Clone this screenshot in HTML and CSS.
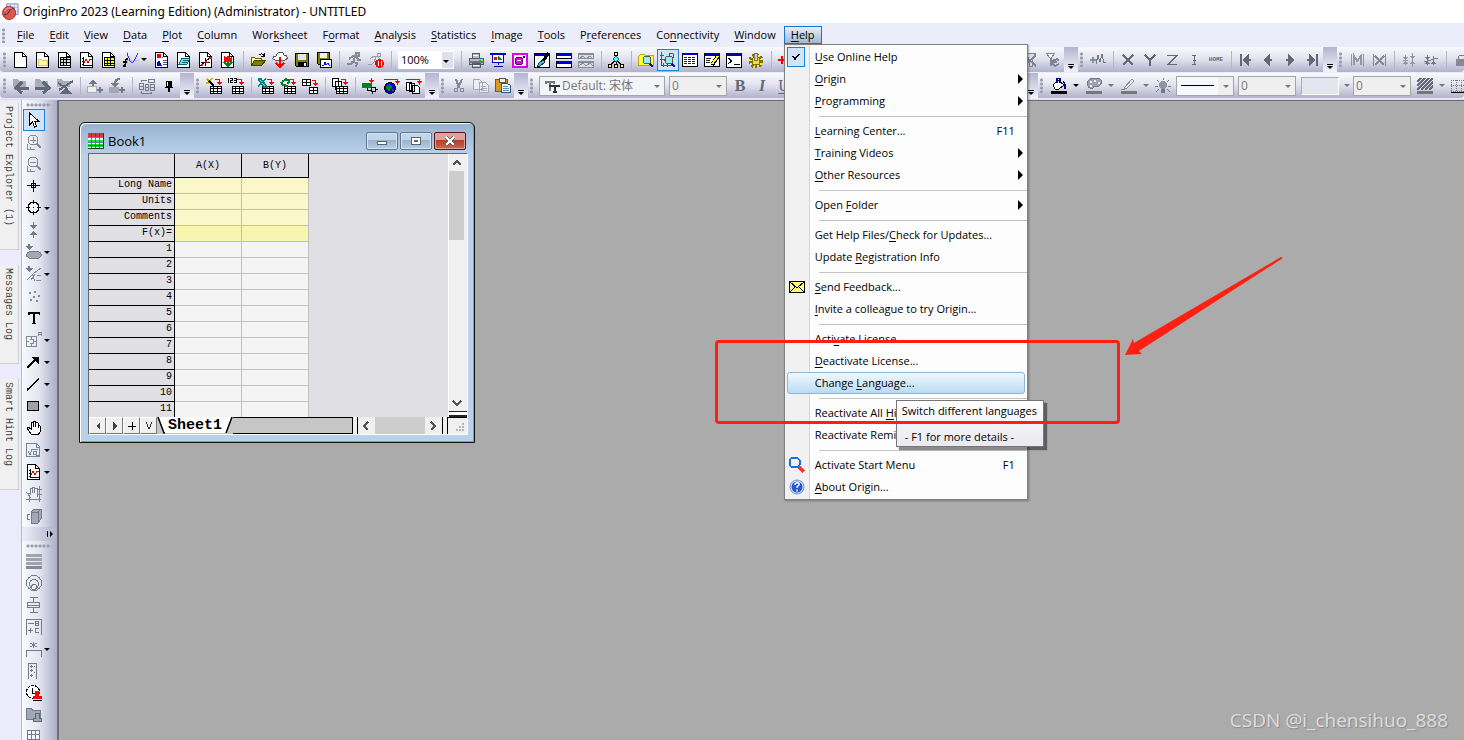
FILE: index.html
```html
<!DOCTYPE html>
<html lang="en">
<head>
<meta charset="utf-8">
<title>OriginPro 2023 (Learning Edition) (Administrator) - UNTITLED</title>
<link rel="stylesheet" href="styles.css">
</head>
<body>
<svg class="sprite" aria-hidden="true">
  <symbol id="doc" viewBox="0 0 16 16"><path d="M1.500 .5h8l4 4v11h-12z" fill="#fff" stroke="#000"/><path d="M9.500 .5v4h4" fill="none" stroke="#000"/></symbol>
  <symbol id="folder-doc" viewBox="0 0 16 16"><use href="#doc"/><path d="M3.500 7.500h3l1 1h5v5h-9z" fill="#ffffa0" stroke="#d8c850"/></symbol>
  <symbol id="grid-doc" viewBox="0 0 16 16"><use href="#doc"/><path d="M3 5h11v9H3z" fill="#000"/><path d="M4 6h2v1H4zM7 6h2v1H7zM10 6h3v1h-3zM4 8h2v2H4zM7 8h2v2H7zM10 8h3v2h-3zM4 11h2v2H4zM7 11h2v2H7zM10 11h3v2h-3z" fill="#ddd"/></symbol>
  <symbol id="graph-doc" viewBox="0 0 16 16"><use href="#doc"/><path d="M4.500 5v8.500H13M3 6h1M3 9h1M3 12h1" stroke="#000" fill="none"/><path d="M5 11l2-4 2 4 2-4 2 0" stroke="#e00000" fill="none"/></symbol>
  <symbol id="matrix-doc" viewBox="0 0 16 16"><use href="#doc"/><path d="M3 5h11v9H3z" fill="#000"/><path d="M4 6h2v2H4zM7 6h2v2H7zM10 6h3v2h-3zM4 9h2v2H4zM7 9h2v2H7zM10 9h3v2h-3zM4 12h2v1H4zM7 12h2v1H7zM10 12h3v1h-3z" fill="#ff0"/></symbol>
  <symbol id="function" viewBox="0 0 16 16"><path d="M2 8h14M4.500 0v12" stroke="#b8b8c8"/><path d="M4 1l3 8c1 2 3 2 4 0l4-8" stroke="#3030ff" fill="none"/><path d="M5 7c-3-1-2 2-3 7H0M0 10h4" stroke="#000" stroke-width="1.500" fill="none"/></symbol>
  <symbol id="layout-doc" viewBox="0 0 16 16"><use href="#doc"/><path d="M3 2h4v4H3z" fill="#f00"/><path d="M3 14v-3l2-3 3 6z" fill="#00f"/><path d="M9 8.500h4M9 10.500h4M9 12.500h4M8 5.500h1" stroke="#557"/></symbol>
  <symbol id="notes-doc" viewBox="0 0 16 16"><use href="#doc"/><path d="M6 6h8l-3 6H3z" fill="#70e8f0" stroke="#006070"/><path d="M7 8h5M6 10h5" stroke="#006070"/></symbol>
  <symbol id="line-doc" viewBox="0 0 16 16"><use href="#doc"/><path d="M2 14L14 4M7.500 6v8M3 10.500h9" stroke="#000"/><path d="M3 13h2M7 10h2M11 6h3" stroke="#f00" stroke-width="2"/></symbol>
  <symbol id="image-doc" viewBox="0 0 16 16"><use href="#doc"/><path d="M4 4l2 2 2-3 2 3 2-2v4c0 3-8 3-8 0z" fill="#f00"/><path d="M8 9v5M4 10l4 4 4-4" stroke="#008020" stroke-width="2" fill="none"/></symbol>
  <symbol id="open" viewBox="0 0 16 16"><path d="M1.500 5.500h3l1 1h6v6h-10z" fill="#ffff90" stroke="#606000"/><path d="M4.500 8.500h11l-4 5h-10z" fill="#808000" stroke="#404000"/><path d="M9 3c2-2 4-1 5 1m0-3v3h-3" stroke="#000" fill="none"/></symbol>
  <symbol id="cloud" viewBox="0 0 16 16"><path d="M3 8c-3 0-3-4 1-4 1-5 8-4 8-1 4 0 4 5 1 5z" fill="#fff" stroke="#555"/><path d="M8 5v10M4 11l4 4 4-4" stroke="#f00" stroke-width="2" fill="none"/></symbol>
  <symbol id="save" viewBox="0 0 16 16"><path d="M1.500 1.500h13v13h-12l-1-1z" fill="#808000" stroke="#000"/><path d="M4 2h8v6H4z" fill="#e4e4e4"/><path d="M4 10h9v4H4z" fill="#000"/><path d="M10 11h2v3h-2z" fill="#eee"/></symbol>
  <symbol id="save-template" viewBox="0 0 16 16"><path d="M1.500 .5h12v12h-11l-1-1z" fill="#808000" stroke="#000"/><path d="M4 1h7v5H4z" fill="#eee"/><path d="M4.500 7.500h11v8h-11z" fill="#fff" stroke="#000"/><path d="M6 13h2l1-3 1 3 2-2 1 2h1" stroke="#00f" fill="none"/></symbol>
  <symbol id="runner" viewBox="0 0 16 16"><path d="M10 1h3v3h-3zM3 7l4-3 4 1 1 3h3M9 5l-2 5 4 1-1 4M7 9l-2 3H1" stroke="#858a98" stroke-width="2" fill="none"/></symbol>
  <symbol id="runner-stop" viewBox="0 0 16 16"><path d="M9 1h3v3H9zM2 7l4-3 4 1 3 3M8 5l-2 5-2 2H0" stroke="#999dab" fill="none"/><circle cx="11.500" cy="11.500" r="4.500" fill="#f00"/><path d="M10 9v5M13 9v5" stroke="#fff"/></symbol>
  <symbol id="print" viewBox="0 0 16 16"><path d="M4 1h7l1 5H4zM1 6h14v6H1zM4 11h8v4H4z" fill="#b8bcc4" stroke="#555b65"/><path d="M5 3h5M5 13h6" stroke="#fff"/><path d="M11 8h2v1h-2z" fill="#0c0"/><path d="M1 9h14v2H1z" fill="#6c7680"/></symbol>
  <symbol id="slides" viewBox="0 0 16 16"><path d="M0 2h16" stroke="#0000c0" stroke-width="2"/><path d="M2.500 3v7h11V3M8 10v3M4 14.500h9" stroke="#0000c0" fill="#fff"/><path d="M4 5h3v3H4z" fill="#f00"/><path d="M8 4l4 4H8z" fill="#080"/></symbol>
  <symbol id="movie" viewBox="0 0 16 16"><path d="M0 1h16v15H0z" fill="#e000e0"/><path d="M2 3h12v11H2z" fill="#fff"/><circle cx="7" cy="9" r="4" fill="#e000e0" stroke="#700070"/><path d="M11 4h2v2h-2z" fill="#00a"/><path d="M5 8h4v1H5z" fill="#fff"/></symbol>
  <symbol id="brush-win" viewBox="0 0 16 16"><path d="M.5 1.500h15v14H.5z" fill="#fff" stroke="#000"/><path d="M1 2h14v2H1z" fill="#0000a0"/><path d="M15 1L9 9" stroke="#000" stroke-width="3"/><path d="M9 8l2 2-5 4-3 1 2-4z" fill="#40c8d8" stroke="#003040"/></symbol>
  <symbol id="two-win" viewBox="0 0 16 16"><path d="M.5 1.500h15v5H.5zM.5 9.500h15v6H.5z" fill="#fff" stroke="#000"/><path d="M1 1h14v3H1zM1 9h14v3H1z" fill="#0000c8"/></symbol>
  <symbol id="two-win-off" viewBox="0 0 16 16"><path d="M.5 1.500h15v5H.5zM.5 9.500h15v6H.5z" fill="#ddd" stroke="#888d9b"/><path d="M0 2h16M0 10h16" stroke="#888d9b" stroke-width="2"/><path d="M1 7l4-3 3 3 4-3 3 3M1 14l4-3 3 3 4-3 3 3" stroke="#888d9b" fill="none"/></symbol>
  <symbol id="tree" viewBox="0 0 16 16"><path d="M8 3v4M8 8l-6 5M8 8l6 5M8 9v4" stroke="#000"/><path d="M6.500 .5h3v3h-3z" fill="#ffff80" stroke="#000"/><path d="M8 4l3 3-3 3-3-3z" fill="#5ff" stroke="#077"/><path d="M.5 12.500h3v3h-3zM6.500 12.500h3v3h-3zM12.500 12.500h3v3h-3z" fill="#ffff80" stroke="#000"/></symbol>
  <symbol id="lens" viewBox="0 0 16 16"><path d="M11 11l4 4" stroke="#0000d0" stroke-width="2"/><circle cx="9" cy="8" r="4" fill="#8ef0f0" stroke="#555"/></symbol>
  <symbol id="find-folder" viewBox="0 0 16 16"><path d="M.5 4.500l2-2h4l1 1h8v10H.5z" fill="#ffff40" stroke="#c0a800"/><use href="#lens"/></symbol>
  <symbol id="find-graph" viewBox="0 0 16 16"><path d="M1.500 0v13H15M0 3h4M0 7h4M3 11v4M7 11v4" stroke="#555" fill="none"/><path d="M4 9l3-4 2 2 1-6 3 1v4" stroke="#f00" fill="none"/><use href="#lens"/></symbol>
  <symbol id="table-win" viewBox="0 0 16 16"><path d="M.5 1.500h15v13H.5z" fill="#fff" stroke="#000"/><path d="M1 1h14v2H1z" fill="#0000c0"/><path d="M2 5.500h12M2 7.500h12M2 9.500h12M2 11.500h12" stroke="#222" stroke-dasharray="3 1"/></symbol>
  <symbol id="edit-win" viewBox="0 0 16 16"><path d="M.5 1.500h15v13H.5z" fill="#fff" stroke="#000"/><path d="M1 1h14v3H1z" fill="#0000b0"/><path d="M2 6.500h5M2 8.500h4M2 10.500h4" stroke="#222"/><path d="M14 4l-6 9" stroke="#000" stroke-width="4"/><path d="M14 4l-6 8" stroke="#ff0" stroke-width="2"/></symbol>
  <symbol id="cmd-win" viewBox="0 0 16 16"><path d="M.5 1.500h15v14H.5z" fill="#fff" stroke="#000"/><path d="M1 1h14v3H1z" fill="#0000b0"/><path d="M2 6l4 3-4 3M8 12.500h6" stroke="#000" fill="none"/></symbol>
  <symbol id="gear" viewBox="0 0 16 16"><circle cx="8" cy="9" r="6" fill="#ffe030" stroke="#807000" stroke-width="3" stroke-dasharray="2 2"/><circle cx="8" cy="9" r="4" fill="#f6dc30" stroke="#807000"/><path d="M6.500 1.500h3v7h-3z" fill="#c8c8c8" stroke="#777"/></symbol>
  <symbol id="plus-red" viewBox="0 0 16 16"><path d="M0 8h8M4 4v8" stroke="#f00" stroke-width="2"/></symbol>
  <symbol id="filter-off" viewBox="0 0 16 16"><path d="M2 1h11L9 7v7H6V7z" fill="#ddd" stroke="#808593"/><path d="M1 3l12 11M13 3L1 14" stroke="#808593" stroke-width="2"/></symbol>
  <symbol id="filter-redo" viewBox="0 0 16 16"><path d="M1 1h9L6 6v7H5V6z" fill="#fff" stroke="#808593"/><path d="M14 9l-2-2-4 2v2m-1 0l3 3 4-2m-5-5v3h3" fill="none" stroke="#808593" stroke-width="2"/></symbol>
  <symbol id="wave-plus" viewBox="0 0 16 16"><path d="M0 8h6M3 5v6" stroke="#8a8fa0" stroke-width="2"/><path d="M6 12l2-9 2 7 2-8 2 9 2-1" stroke="#747a88" fill="none"/></symbol>
  <symbol id="x" viewBox="0 0 16 16"><path d="M3 3l10 10M13 3L3 13" stroke="#636876" stroke-width="1.500"/></symbol>
  <symbol id="y" viewBox="0 0 16 16"><path d="M3 3l5 5 5-5M8 8v6" stroke="#636876" stroke-width="1.500" fill="none"/></symbol>
  <symbol id="z" viewBox="0 0 16 16"><path d="M3 3.500h10l-9 9h9" stroke="#636876" stroke-width="1.500" fill="none"/></symbol>
  <symbol id="ibar" viewBox="0 0 16 16"><path d="M8 3v10M6 3.500h4M6 12.500h4M7 8h3" stroke="#636876"/></symbol>
  <symbol id="first" viewBox="0 0 16 16"><path d="M3 2v12M6 8h7M10 4L6 8l4 4z" fill="#636876" stroke="#636876" stroke-width="2"/></symbol>
  <symbol id="prev" viewBox="0 0 16 16"><path d="M5 8h7M9 4L5 8l4 4z" fill="#636876" stroke="#636876" stroke-width="2"/></symbol>
  <symbol id="next" viewBox="0 0 16 16"><path d="M4 8h7M7 4l4 4-4 4z" fill="#636876" stroke="#636876" stroke-width="2"/></symbol>
  <symbol id="last" viewBox="0 0 16 16"><path d="M13 2v12M3 8h7M6 4l4 4-4 4z" fill="#636876" stroke="#636876" stroke-width="2"/></symbol>
  <symbol id="mask" viewBox="0 0 16 16"><path d="M2.500 2v12M14.500 2v12" stroke="#9297a6"/><path d="M5 13V4l3 5 4-5v9" stroke="#9297a6" stroke-width="2" fill="none"/></symbol>
  <symbol id="unmask" viewBox="0 0 16 16"><path d="M2.500 2v12M14.500 2v12" stroke="#858a98"/><path d="M4 4l9 9M13 4l-9 9" stroke="#858a98" stroke-width="2"/></symbol>
  <symbol id="swap" viewBox="0 0 16 16"><path d="M4.500 3v10M11.500 1v14M2 8.500h5" stroke="#9297a6"/><path d="M2 5h5L4.500 8zM2 12h5l-2.500-3zM9 4h5l-2.500 3zM9 12h5l-2.500-3z" fill="#9297a6"/></symbol>
  <symbol id="swap-line" viewBox="0 0 16 16"><path d="M1 10c5 0 8-4 14-4M4.500 3v10M10.500 4v9" stroke="#747a88" fill="none"/><path d="M2 5h5L4.500 8zM2 12h5l-2.500-3zM8 12h5l-2.500-3z" fill="#747a88"/></symbol>
  <symbol id="lock" viewBox="0 0 16 16"><path d="M3 7h12v7H3z" fill="#858a98"/><path d="M5 7c0-5 8-5 8 0" fill="none" stroke="#747a88"/></symbol>
  <symbol id="nav-left" viewBox="0 0 16 16"><path d="M0 1h5l1 2h7v6H0z" fill="#a9adba"/><path d="M16 10H4M9 4l-6 6 6 5" stroke="#636876" stroke-width="3" fill="none"/></symbol>
  <symbol id="nav-right" viewBox="0 0 16 16"><path d="M0 1h5l1 2h7v6H0z" fill="#a9adba"/><path d="M0 10h13M8 4l6 6-6 5" stroke="#636876" stroke-width="3" fill="none"/></symbol>
  <symbol id="nav-up" viewBox="0 0 16 16"><path d="M0 1h5l1 2h7v6H0z" fill="#a9adba"/><path d="M2 12L16 3M1 5l10 6" stroke="#636876" stroke-width="2" fill="none"/><path d="M9 9l6 7H3z" fill="#636876"/></symbol>
  <symbol id="import" viewBox="0 0 16 16"><path d="M.5 8.500h9v6h-9z" fill="#eee" stroke="#aaaebb"/><path d="M6 8V2M10 12h6M13 9v6" stroke="#747a88" stroke-width="2"/><path d="M1 6l5-5 4 5z" fill="#747a88"/></symbol>
  <symbol id="export" viewBox="0 0 16 16"><path d="M0 9h10v6H0z" fill="#a3a8b5"/><path d="M11 1C7 1 6 3 6 6M10 12h6M13 9v6" stroke="#747a88" stroke-width="2" fill="none"/><path d="M2 5h8l-4 5z" fill="#747a88"/></symbol>
  <symbol id="replace" viewBox="0 0 16 16"><path d="M.5 5.500h4v6h-4zM6.500 6.500h3v6h-3zM11.500 6.500h4v6h-4zM2 4V2.500h6M9 1.500v3h6v-3zM2.500 13v2.500h10V14M1 8.500h3M6 9.500h3M12 9.500h3" stroke="#747a88" fill="none"/></symbol>
  <symbol id="pin" viewBox="0 0 16 16"><path d="M5 3h6v6H5z" fill="#000"/><path d="M4 9.500h8M8 9v5" stroke="#000" stroke-width="1.500"/><path d="M6 4h1v4H6z" fill="#fff"/></symbol>
  <symbol id="sheet" viewBox="0 0 16 16"><path d="M4 8h12v8H4z" fill="#000"/><path d="M5 9h2v1H5zM8 9h3v1H8zM12 9h3v1h-3zM5 11h2v2H5zM8 11h3v2H8zM12 11h3v2h-3zM5 14h2v1H5zM8 14h3v1H8zM12 14h3v1h-3z" fill="#fff"/><path d="M9 1.500h4.500V4" stroke="#f00" fill="none"/><path d="M11 4h5l-2.500 3z" fill="#f00"/></symbol>
  <symbol id="wizard" viewBox="0 0 16 16"><use href="#sheet"/><path d="M1 1l2 2M6 0L4 3M0 5h3" stroke="#c8b800" stroke-width="1.500"/><path d="M3 3l5 5" stroke="#000" stroke-width="1.500"/></symbol>
  <symbol id="import-123" viewBox="0 0 16 16"><use href="#sheet"/><path d="M.5 0v5M2 .5h2.500v2H2.500v2H5M6 .5h2.500v4H6M6 2.500h2" stroke="#000" fill="none"/></symbol>
  <symbol id="excel" viewBox="0 0 16 16"><use href="#sheet"/><path d="M0 1h3l6 8H6zM8 1L0 8" stroke="#008080" fill="#7ee0e0" stroke-width="1.500"/></symbol>
  <symbol id="refresh-sheet" viewBox="0 0 16 16"><use href="#sheet"/><path d="M2 4l4-3 3 2-1 3M1 4l2 3 5 1" stroke="#008020" fill="none" stroke-width="2"/></symbol>
  <symbol id="clone-sheet" viewBox="0 0 16 16"><path d="M.5 1.500h8v6h-8zM7.500 9.500h8v6h-8zM0 4.500h9M4.500 2v6M8 12.500h8M11.500 10v6" fill="#fff" stroke="#000"/><path d="M10 2.500h3.500V5" stroke="#f00" fill="none"/><path d="M11 5h5l-2.500 3z" fill="#f00"/></symbol>
  <symbol id="stack" viewBox="0 0 16 16"><path d="M.5 .5h6v8h-6zM3.500 3.500h6v8h-6z" fill="#fff" stroke="#000"/><use href="#sheet"/></symbol>
  <symbol id="connector" viewBox="0 0 16 16"><path d="M0 5h10v5H0z" fill="#008020"/><path d="M5.500 10v2.500h3M9.500 9.500h4v4h-4zM14 11.500h2M10.500 13v3" stroke="#000" fill="none"/><path d="M9.500 0v3" stroke="#f00"/><path d="M7 2h5L9.500 5z" fill="#f00"/></symbol>
  <symbol id="globe" viewBox="0 0 16 16"><circle cx="6" cy="10" r="5.500" fill="#0000e0" stroke="#000"/><path d="M3 7l3-1 2 3-3 5-3-4zM8 11l2 1-1 2z" fill="#008020"/><path d="M0 1.500h13.500V4" stroke="#f00" fill="none"/><path d="M11 3h5l-2.500 4z" fill="#f00"/></symbol>
  <symbol id="docs-out" viewBox="0 0 16 16"><path d="M.5 4.500h5v8h-5zM3.500 5.500h5v8h-5zM6.500 7.500h5l2 2v6h-7z" fill="#fff" stroke="#000"/><path d="M0 1.500h13.500V4" stroke="#f00" fill="none"/><path d="M11 3h5l-2.500 4z" fill="#f00"/></symbol>
  <symbol id="cut" viewBox="0 0 16 16"><path d="M5 1l3 9M11 1L7 10" stroke="#858a98" stroke-width="2"/><circle cx="5" cy="12" r="2" fill="none" stroke="#858a98"/><circle cx="11" cy="12" r="2" fill="none" stroke="#858a98"/></symbol>
  <symbol id="copy" viewBox="0 0 16 16"><path d="M.5 1.500h6l3 3v7h-9zM6.500 4.500h6l3 3v7h-9z" fill="#ececf4" stroke="#a5a9b7"/><path d="M8 8.500h5M8 10.500h6M8 12.500h6" stroke="#a5a9b7"/></symbol>
  <symbol id="paste" viewBox="0 0 16 16"><path d="M.5 1.500h12v12H.5z" fill="#d69a22" stroke="#7c5910"/><path d="M4 0h6v4H4z" fill="#eee" stroke="#555"/><path d="M6.500 5.500h6l3 2v7h-9z" fill="#e8f2ff" stroke="#405070"/><path d="M8 8.500h5M8 10.500h6M8 12.500h6" stroke="#59c"/></symbol>
  <symbol id="tt" viewBox="0 0 16 16"><path d="M2 6V3.500h8V6M6 4v9" stroke="#777" stroke-width="2" fill="none"/><path d="M6 9V7.500h9V9M11 8v6M9 14h4" stroke="#333" stroke-width="2" fill="none"/></symbol>
  <symbol id="bucket" viewBox="0 0 16 16"><path d="M2 7l5-5 6 5-5 4H4z" fill="#fff" stroke="#000"/><path d="M6 5V0h3v5M12 4c2 0 2 3 2 7" stroke="#000080" fill="none" stroke-width="1.500"/><path d="M0 13h16v3H0z" fill="#000"/></symbol>
  <symbol id="palette" viewBox="0 0 16 16"><path d="M2 8C-2 1 8-1 14 1c3 2 1 7-3 8-4 0-4-1-4 1-1 2-4 0-5-2z" fill="#9ba1ae" stroke="#747a88"/><path d="M4 3h2v2H4zM8 2h2v2H8zM12 4h2v2h-2zM4 7h2v2H4z" fill="#eee"/><path d="M0 13h16v3H0z" fill="#777"/></symbol>
  <symbol id="pen" viewBox="0 0 16 16"><path d="M3 10L11 1l2 2-8 8zM0 11h4" fill="#eee" stroke="#858a98"/><path d="M0 13h16v3H0z" fill="#777"/></symbol>
  <symbol id="bulb" viewBox="0 0 16 16"><circle cx="8" cy="7" r="4" fill="#8e94a2"/><path d="M6 11h4v4H6z" fill="#747a88"/><path d="M8 0v2M0 8h3M13 8h3M2 2l2 2M14 2l-2 2M1 14l3-3M15 14l-3-3" stroke="#747a88"/></symbol>
  <symbol id="hatch" viewBox="0 0 16 16"><path d="M0 4l4-4M0 8l8-8M0 12L12 0M4 12L16 0M8 12l8-8M12 12l4-4" stroke="#636876" stroke-width="1.500"/><path d="M0 13h16v3H0z" fill="#777"/></symbol>
  <symbol id="borders" viewBox="0 0 16 16"><path d="M0 2.500h15v11H0zM0 7.500h15M5.500 2v11M10.500 2v11" stroke="#777" fill="none" stroke-dasharray="1 1"/><path d="M0 14.500h16" stroke="#000"/></symbol>
  <symbol id="pointer" viewBox="0 0 16 16"><path d="M3.500 1v12l3-3 2 5 2-1-2-5h4z" fill="#fff" stroke="#000"/></symbol>
  <symbol id="zoom-in" viewBox="0 0 16 16"><circle cx="7" cy="6" r="5" fill="none" stroke="#858a98"/><path d="M4 6.500h6M7.500 3v6M1.500 10v5h7M4.500 13v2" stroke="#858a98" fill="none"/><path d="M11 10l4 4" stroke="#858a98" stroke-width="2"/></symbol>
  <symbol id="zoom-out" viewBox="0 0 16 16"><circle cx="7" cy="6" r="5" fill="none" stroke="#858a98"/><path d="M4 6.500h6M1.500 10v5h7M4.500 13v2" stroke="#858a98" fill="none"/><path d="M11 10l4 4" stroke="#858a98" stroke-width="2"/></symbol>
  <symbol id="cross" viewBox="0 0 16 16"><path d="M7.500 2v12M1 7.500h13" stroke="#000"/><path d="M5.500 5.500h4v4h-4z" fill="none" stroke="#000"/></symbol>
  <symbol id="target" viewBox="0 0 16 16"><circle cx="7.500" cy="7.500" r="5.500" fill="#f4f4ff" stroke="#000"/><path d="M7.500 0v4M7.500 11v4M0 7.500h4M11 7.500h4M7 7.500h1" stroke="#000"/></symbol>
  <symbol id="squeeze" viewBox="0 0 16 16"><path d="M7.500 0v5M7.500 11v5" stroke="#747a88"/><path d="M3 3h9L7.500 7zM3 13h9L7.500 9z" fill="#747a88"/></symbol>
  <symbol id="ellipse-pick" viewBox="0 0 16 16"><ellipse cx="8" cy="11" rx="7.500" ry="4" fill="#a3a8b5" stroke="#747a88"/><path d="M3 0v4" stroke="#747a88" stroke-width="2"/><path d="M0 2h7L3 6z" fill="#747a88"/></symbol>
  <symbol id="curve-pick" viewBox="0 0 16 16"><path d="M1 14C6 8 9 6 15 2M6 8l3 7M5 14l4-6M11 9.500h4M10 14.500h5" stroke="#858a98" fill="none"/><path d="M3 0v4" stroke="#747a88" stroke-width="2"/><path d="M0 2h7L3 6z" fill="#747a88"/></symbol>
  <symbol id="dots" viewBox="0 0 16 16"><path d="M8 3h2v2H8zM3 4h2v2H3zM12 7h2v2h-2zM7 8h2v2H7zM4 11h2v2H4zM10 12h2v2h-2z" fill="#858a98"/></symbol>
  <symbol id="text" viewBox="0 0 16 16"><path d="M2 5V2h12v3h-1l-1-1H9v9l2 1H5l2-1V4H4L3 5z" fill="#000"/></symbol>
  <symbol id="region" viewBox="0 0 16 16"><path d="M.5 4.500h10v10H.5zM5.500 4v4M5.500 11v4M0 9.500h3M8 9.500h3M3.500 7.500h4v4h-4M12.500 4V.5h3V4M13 2.500h3" stroke="#858a98" fill="none"/></symbol>
  <symbol id="arrow" viewBox="0 0 16 16"><path d="M1 14l9-9" stroke="#000" stroke-width="1.500"/><path d="M5 3h8v8z" fill="#000"/></symbol>
  <symbol id="line" viewBox="0 0 16 16"><path d="M1 14L13 3" stroke="#000" stroke-width="1.500"/></symbol>
  <symbol id="rect" viewBox="0 0 16 16"><path d="M1.500 3.500h11v9h-11z" fill="#a0a0a0" stroke="#000"/></symbol>
  <symbol id="hand" viewBox="0 0 16 16"><path d="M5 14L1 8l1-1 3 2V3l2-1v5V1h2v6l1-5h1l1 1v5l1-3 1 1v6l-2 3z" fill="#fff" stroke="#000"/></symbol>
  <symbol id="equation" viewBox="0 0 16 16"><path d="M.5 1.500h10l3 3v10H.5z" fill="#e8f0fa" stroke="#7b8290"/><path d="M10.500 1v4h3M2 9l2 4 2-6h6M7.500 9.500h3v3h-3zM10.500 9v4h2" stroke="#7b8290" fill="none"/></symbol>
  <symbol id="hand-grid" viewBox="0 0 16 16"><path d="M5 12L1 7l3 1V2h2v5V1h2v6l1-5h2v9" fill="#eef" stroke="#7b8290"/><path d="M0 13.500h15M3.500 11v5M13.500 0v16M12 3.500h4M12 8.500h4" fill="none" stroke="#7b8290"/></symbol>
  <symbol id="cube" viewBox="0 0 16 16"><path d="M5 4l3-3h7v10l-3 4H5z" fill="#a3a8b5" stroke="#747a88"/><path d="M5 4h7v11M12 4l3-3M4 6C0 6 0 12 4 12" fill="none" stroke="#747a88"/></symbol>
  <symbol id="bars" viewBox="0 0 16 16"><path d="M0 1h16v3H0zM0 5h16v3H0zM0 9h16v3H0z" fill="#9ea3b0"/><path d="M0 13h16v3H0z" fill="#858a98"/></symbol>
  <symbol id="rings" viewBox="0 0 16 16"><circle cx="8" cy="8" r="7.500" fill="none" stroke="#747a88"/><circle cx="8" cy="9" r="4.500" fill="none" stroke="#747a88"/><circle cx="8" cy="12" r="2.500" fill="#eee" stroke="#747a88"/></symbol>
  <symbol id="box-plot" viewBox="0 0 16 16"><path d="M4 .5h8M7.500 1v5M1.500 5.500h12v5h-12zM2 8.500h12M7.500 11v4M4 15.500h8" stroke="#747a88" fill="none"/></symbol>
  <symbol id="legend" viewBox="0 0 16 16"><path d="M.5 16V.5h15V16M2 4.500h6M2 11.500h5M4.500 9v5M9.500 2.500h3v4h-3zM9 4.500h4M13 9.500H9.500v4H13" stroke="#747a88" fill="none"/></symbol>
  <symbol id="bracket" viewBox="0 0 16 16"><path d="M.5 16V9.500h15V16M7.500 1v6M4 2l7 4M11 2L4 6" stroke="#747a88" fill="none"/></symbol>
  <symbol id="scale" viewBox="0 0 16 16"><path d="M2.500 16V.5h8V16M4 3.500h3M8 3.500h1M4 7.500h3M8 9.500h1M4 12.500h3M5.500 2v3M5.500 6v3M5.500 11v3" stroke="#747a88" fill="none"/></symbol>
  <symbol id="clock-stamp" viewBox="0 0 16 16"><circle cx="7" cy="7" r="6.500" fill="#fff" stroke="#000" stroke-dasharray="3 1"/><path d="M6.500 3v5h4" stroke="#000" fill="none"/><path d="M9 6h4v5h3v3H7v-3h2z" fill="#f00"/><path d="M7 15.500h9" stroke="#000"/></symbol>
  <symbol id="folder-stamp" viewBox="0 0 16 16"><path d="M.5 1.500h5l1 2h8v9H.5z" fill="#a3a8b5" stroke="#747a88"/><path d="M9.500 6.500h4v5h2v3h-8v-3h2z" fill="#9fa4b2" stroke="#636876"/></symbol>
  <symbol id="grid" viewBox="0 0 16 16"><path d="M1.500 1.500h12v14h-12zM1 5.500h13M1 10.500h13M5.500 1v14M9.500 1v14" stroke="#747a88" fill="#f4f4ff"/></symbol>
</svg>

<header class="titlebar">
  <svg class="app-icon" viewBox="0 0 18 18"><path d="M5 .5h12v11H5z" fill="#eef4ff" stroke="#6e7db8"/><path d="M9 1v10M13 1v10M5 4h12M5 8h12" stroke="#a5b5e0"/><circle cx="7.500" cy="10" r="7" fill="#d85a50" stroke="#a83028"/><path d="M2 12l4-1 3-5 4-1" stroke="#333" fill="none"/><path d="M3 8c1-4 6-4 8-2" stroke="#f7b2a8" fill="none"/></svg>
  <h1>OriginPro 2023 (Learning Edition) (Administrator) - UNTITLED</h1>
</header>

<nav class="menubar" aria-label="Main menu">
  <span class="grip"></span>
  <button><u>F</u>ile</button><button><u>E</u>dit</button><button><u>V</u>iew</button><button><u>D</u>ata</button><button><u>P</u>lot</button><button><u>C</u>olumn</button><button>Wor<u>k</u>sheet</button><button>F<u>o</u>rmat</button><button><u>A</u>nalysis</button><button><u>S</u>tatistics</button><button><u>I</u>mage</button><button><u>T</u>ools</button><button>P<u>r</u>eferences</button><button>Co<u>n</u>nectivity</button><button><u>W</u>indow</button>
  <div class="menu-anchor">
    <button class="open"><u>H</u>elp</button>
    <div class="menu" role="menu">
      <button role="menuitemcheckbox" aria-checked="true"><span class="mark checked"><svg viewBox="0 0 16 16"><path d="M5 7l2 3 4-5" fill="none" stroke="#000" stroke-width="1.500"/></svg></span><span><u>U</u>se Online Help</span></button>
      <button role="menuitem" class="sub"><span class="mark"></span><span><u>O</u>rigin</span></button>
      <button role="menuitem" class="sub"><span class="mark"></span><span><u>P</u>rogramming</span></button>
      <hr>
      <button role="menuitem"><span class="mark"></span><span><u>L</u>earning Center...</span><kbd>F11</kbd></button>
      <button role="menuitem" class="sub"><span class="mark"></span><span><u>T</u>raining Videos</span></button>
      <button role="menuitem" class="sub"><span class="mark"></span><span><u>O</u>ther Resources</span></button>
      <hr>
      <button role="menuitem" class="sub"><span class="mark"></span><span>Open <u>F</u>older</span></button>
      <hr>
      <button role="menuitem"><span class="mark"></span><span>Get Help Files/<u>C</u>heck for Updates...</span></button>
      <button role="menuitem"><span class="mark"></span><span>Update <u>R</u>egistration Info</span></button>
      <hr>
      <button role="menuitem"><span class="mark"><svg viewBox="0 0 16 16"><path d="M.5 2.500h15v11H.5z" fill="#ffff80" stroke="#000"/><path d="M1 3l7 6 7-6M1 13l5-5M15 13l-5-5" fill="none" stroke="#000"/></svg></span><span><u>S</u>end Feedback...</span></button>
      <button role="menuitem"><span class="mark"></span><span><u>I</u>nvite a colleague to try Origin...</span></button>
      <hr>
      <button role="menuitem"><span class="mark"></span><span>Acti<u>v</u>ate License...</span></button>
      <button role="menuitem"><span class="mark"></span><span><u>D</u>eactivate License...</span></button>
      <button role="menuitem" class="hot"><span class="mark"></span><span>Change <u>L</u>anguage...</span></button>
      <hr>
      <button role="menuitem"><span class="mark"></span><span>Reactivate All <u>H</u>ints</span></button>
      <button role="menuitem"><span class="mark"></span><span>Reactivate Reminders</span></button>
      <hr>
      <button role="menuitem"><span class="mark"><svg viewBox="0 0 16 16"><path d="M2.500 1h6l2 2v5l-2 2h-6l-2-2V3z" fill="none" stroke="#1870e0" stroke-width="2"/><path d="M10 10l5 5" stroke="#e83c38" stroke-width="3"/></svg></span><span>Activate Start Menu</span><kbd>F1</kbd></button>
      <button role="menuitem"><span class="mark"><svg class="smooth" viewBox="0 0 16 16"><circle cx="8" cy="8" r="7" fill="#d5e3fb" stroke="#7090d0"/><circle cx="8" cy="8" r="5.500" fill="#2458cc"/><path d="M6 6c0-3 5-3 4 0-1 1-2 1-2 3M8 10.500v2" fill="none" stroke="#fff" stroke-width="1.500"/></svg></span><span><u>A</u>bout Origin...</span></button>
      <div class="tooltip" role="tooltip"><span>Switch different languages</span><span class="more">- F1 for more details -</span></div>
    </div>
  </div>
</nav>

<div class="toolbar" role="toolbar" aria-label="Standard">
  <span class="grip"></span>
  <button aria-label="New project"><svg><use href="#doc"/></svg></button><button aria-label="New folder"><svg><use href="#folder-doc"/></svg></button><button aria-label="New workbook"><svg><use href="#grid-doc"/></svg></button><button aria-label="New graph"><svg><use href="#graph-doc"/></svg></button><button aria-label="New matrix"><svg><use href="#matrix-doc"/></svg></button><button class="drop" aria-label="New function plot"><svg><use href="#function"/></svg></button><button aria-label="New layout"><svg><use href="#layout-doc"/></svg></button><button aria-label="New notes"><svg><use href="#notes-doc"/></svg></button><button aria-label="Digitize"><svg><use href="#line-doc"/></svg></button><button aria-label="New image"><svg><use href="#image-doc"/></svg></button>
  <i class="sep"></i>
  <button aria-label="Open"><svg><use href="#open"/></svg></button><button aria-label="Open from cloud"><svg><use href="#cloud"/></svg></button><button aria-label="Save"><svg><use href="#save"/></svg></button><button aria-label="Save template"><svg><use href="#save-template"/></svg></button>
  <i class="sep"></i>
  <button aria-label="Run"><svg><use href="#runner"/></svg></button><button aria-label="Stop"><svg><use href="#runner-stop"/></svg></button>
  <i class="sep"></i>
  <label class="combo zoom"><select aria-label="Zoom"><option>100%</option></select></label>
  <i class="sep"></i>
  <button aria-label="Print"><svg><use href="#print"/></svg></button><button aria-label="Slide show"><svg><use href="#slides"/></svg></button><button aria-label="Video"><svg><use href="#movie"/></svg></button><button aria-label="Custom"><svg><use href="#brush-win"/></svg></button><button aria-label="Tile"><svg><use href="#two-win"/></svg></button><button aria-label="Tile graphs"><svg><use href="#two-win-off"/></svg></button>
  <i class="sep"></i>
  <button aria-label="Project tree"><svg><use href="#tree"/></svg></button>
  <i class="sep"></i>
  <button aria-label="Find in project"><svg><use href="#find-folder"/></svg></button><button class="on" aria-label="Object manager"><svg><use href="#find-graph"/></svg></button><button aria-label="Results log"><svg><use href="#table-win"/></svg></button><button aria-label="Script window"><svg><use href="#edit-win"/></svg></button><button aria-label="Command window"><svg><use href="#cmd-win"/></svg></button><button aria-label="Code builder"><svg><use href="#gear"/></svg></button>
  <i class="sep"></i>
  <button aria-label="Add column"><svg><use href="#plus-red"/></svg></button>
  <span class="covered"></span>
  <button aria-label="Remove filter"><svg><use href="#filter-off"/></svg></button><button aria-label="Reapply filter"><svg><use href="#filter-redo"/></svg></button>
  <span class="more-tools"></span><span class="grip"></span>
  <button aria-label="Add peaks"><svg><use href="#wave-plus"/></svg></button>
  <i class="sep"></i>
  <button aria-label="Set X"><svg><use href="#x"/></svg></button><button aria-label="Set Y"><svg><use href="#y"/></svg></button><button aria-label="Set Z"><svg><use href="#z"/></svg></button><button aria-label="Error bar"><svg><use href="#ibar"/></svg></button><button class="home">HOME</button>
  <i class="sep"></i>
  <button aria-label="First"><svg><use href="#first"/></svg></button><button aria-label="Previous"><svg><use href="#prev"/></svg></button><button aria-label="Next"><svg><use href="#next"/></svg></button><button aria-label="Last"><svg><use href="#last"/></svg></button>
  <span class="more-tools"></span><span class="grip"></span>
  <button aria-label="Mask"><svg><use href="#mask"/></svg></button><button aria-label="Unmask"><svg><use href="#unmask"/></svg></button>
  <i class="sep"></i>
  <button aria-label="Swap"><svg><use href="#swap"/></svg></button><button aria-label="Swap curve"><svg><use href="#swap-line"/></svg></button>
  <i class="sep"></i>
  <button aria-label="Lock"><svg><use href="#lock"/></svg></button>
</div>

<div class="toolbar" role="toolbar" aria-label="Import and format">
  <span class="grip"></span>
  <button aria-label="Back"><svg><use href="#nav-left"/></svg></button><button aria-label="Forward"><svg><use href="#nav-right"/></svg></button><button aria-label="Up"><svg><use href="#nav-up"/></svg></button>
  <i class="sep"></i>
  <button aria-label="Import"><svg><use href="#import"/></svg></button><button aria-label="Export"><svg><use href="#export"/></svg></button>
  <i class="sep"></i>
  <button aria-label="Replace"><svg><use href="#replace"/></svg></button><button aria-label="Pin"><svg><use href="#pin"/></svg></button>
  <span class="more-tools"></span><span class="grip"></span>
  <button aria-label="Import wizard"><svg><use href="#wizard"/></svg></button><button aria-label="Import ASCII"><svg><use href="#import-123"/></svg></button>
  <i class="sep"></i>
  <button aria-label="Import Excel"><svg><use href="#excel"/></svg></button><button aria-label="Re-import"><svg><use href="#refresh-sheet"/></svg></button><button aria-label="Clone import"><svg><use href="#clone-sheet"/></svg></button>
  <i class="sep"></i>
  <button aria-label="Batch"><svg><use href="#stack"/></svg></button>
  <i class="sep"></i>
  <button aria-label="Connect file"><svg><use href="#connector"/></svg></button><button aria-label="Connect web"><svg><use href="#globe"/></svg></button><button aria-label="Connect files"><svg><use href="#docs-out"/></svg></button>
  <span class="more-tools"></span><span class="grip"></span>
  <button aria-label="Cut"><svg><use href="#cut"/></svg></button><button aria-label="Copy"><svg><use href="#copy"/></svg></button><button aria-label="Paste"><svg><use href="#paste"/></svg></button>
  <span class="more-tools"></span><span class="grip"></span>
  <label class="combo off font"><svg><use href="#tt"/></svg><select disabled aria-label="Font"><option>Default: 宋体</option></select></label>
  <label class="combo off"><select disabled aria-label="Font size"><option>0</option></select></label>
  <button class="letter"><b>B</b></button><button class="letter"><b><em>I</em></b></button><button class="letter"><u>U</u></button>
  <span class="covered wide"></span>
  <span class="more-tools"></span><span class="grip"></span>
  <button class="drop split" aria-label="Fill colour"><svg><use href="#bucket"/></svg></button><button class="drop split dim" aria-label="Palette"><svg><use href="#palette"/></svg></button><button class="drop split dim" aria-label="Line colour"><svg><use href="#pen"/></svg></button><button aria-label="Light"><svg><use href="#bulb"/></svg></button>
  <label class="combo off stroke"><select disabled aria-label="Line style"><option></option></select></label>
  <label class="combo off"><select disabled aria-label="Line width"><option>0</option></select></label>
  <button class="drop swatch dim" aria-label="Pattern"></button>
  <label class="combo off"><select disabled aria-label="Pattern width"><option>0</option></select></label>
  <button class="drop split dim" aria-label="Hatch"><svg><use href="#hatch"/></svg></button><button aria-label="Borders"><svg><use href="#borders"/></svg></button>
</div>

<div class="body">
  <nav class="side-tabs" aria-label="Docked panels"><button>Project Explorer (1)</button><button>Messages Log</button><button>Smart Hint Log</button></nav>
  <div class="tools" role="toolbar" aria-label="Tools">
    <span class="hgrip"></span>
    <button class="on" aria-label="Pointer"><svg><use href="#pointer"/></svg></button><button aria-label="Zoom in"><svg><use href="#zoom-in"/></svg></button><button aria-label="Zoom out"><svg><use href="#zoom-out"/></svg></button><button aria-label="Screen reader"><svg><use href="#cross"/></svg></button><button class="drop" aria-label="Data cursor"><svg><use href="#target"/></svg></button><button aria-label="Data selector"><svg><use href="#squeeze"/></svg></button><button class="drop" aria-label="Selection"><svg><use href="#ellipse-pick"/></svg></button><button class="drop" aria-label="Mask points"><svg><use href="#curve-pick"/></svg></button><button aria-label="Draw data"><svg><use href="#dots"/></svg></button><button aria-label="Text"><svg><use href="#text"/></svg></button><button class="drop" aria-label="Annotate"><svg><use href="#region"/></svg></button><button class="drop" aria-label="Arrow"><svg><use href="#arrow"/></svg></button><button class="drop" aria-label="Line"><svg><use href="#line"/></svg></button><button class="drop" aria-label="Rectangle"><svg><use href="#rect"/></svg></button><button aria-label="Pan"><svg><use href="#hand"/></svg></button><button class="drop" aria-label="Equation"><svg><use href="#equation"/></svg></button><button class="drop" aria-label="Insert graph"><svg><use href="#graph-doc"/></svg></button><button aria-label="Rescale"><svg><use href="#hand-grid"/></svg></button><button aria-label="Rotate"><svg><use href="#cube"/></svg></button>
    <span class="hmore"></span><span class="hgrip"></span>
    <button aria-label="Layers"><svg><use href="#bars"/></svg></button><button aria-label="Rings"><svg><use href="#rings"/></svg></button><button aria-label="Box"><svg><use href="#box-plot"/></svg></button><button aria-label="Legend"><svg><use href="#legend"/></svg></button><button class="drop" aria-label="Bracket"><svg><use href="#bracket"/></svg></button><button aria-label="Scale"><svg><use href="#scale"/></svg></button><button aria-label="Time stamp"><svg><use href="#clock-stamp"/></svg></button><button aria-label="Path stamp"><svg><use href="#folder-stamp"/></svg></button><button aria-label="Table"><svg><use href="#grid"/></svg></button>
  </div>

  <main class="desktop">
    <section class="book" aria-label="Book1">
      <header class="book-title">
        <svg class="book-icon" viewBox="0 0 16 16"><path d="M0 0h16v16H0z" fill="#333"/><path d="M0 0h15v4H0z" fill="#e03050"/><path d="M0 4h15v11H0z" fill="#e8ffe8"/><path d="M0 7h15v2H0zM0 11h15v3H0z" fill="#20e040"/><path d="M3.500 0v15M7.500 0v15M11.500 0v15M0 4.500h15M0 9.500h15M0 12.500h15" stroke="#304080" stroke-opacity=".7"/></svg>
        <h2>Book1</h2>
        <button aria-label="Minimize"><svg viewBox="0 0 16 16"><path d="M3.500 8.500h9v3h-9z" fill="#fff" stroke="#566"/></svg></button>
        <button aria-label="Maximize"><svg viewBox="0 0 16 16"><path d="M3.500 4.500h9v7h-9z" fill="#fff" stroke="#566"/><path d="M6.500 7.500h3v1h-3z" fill="#a9bdd4" stroke="#566"/></svg></button>
        <button class="close" aria-label="Close"><svg viewBox="0 0 16 16"><path d="M4 4l8 8M12 4l-8 8" stroke="#566" stroke-width="4"/><path d="M4 4l8 8M12 4l-8 8" stroke="#fff" stroke-width="2"/></svg></button>
      </header>
      <div class="book-body">
        <div class="sheet-row">
          <div class="sheet">
            <table>
              <thead><tr><th></th><th>A(X)</th><th>B(Y)</th></tr></thead>
              <tbody>
                <tr class="label"><th>Long Name</th><td></td><td></td></tr><tr class="label"><th>Units</th><td></td><td></td></tr><tr class="label"><th>Comments</th><td></td><td></td></tr><tr class="label formula"><th>F(x)=</th><td></td><td></td></tr>
                <tr><th>1</th><td></td><td></td></tr><tr><th>2</th><td></td><td></td></tr><tr><th>3</th><td></td><td></td></tr><tr><th>4</th><td></td><td></td></tr><tr><th>5</th><td></td><td></td></tr><tr><th>6</th><td></td><td></td></tr><tr><th>7</th><td></td><td></td></tr><tr><th>8</th><td></td><td></td></tr><tr><th>9</th><td></td><td></td></tr><tr><th>10</th><td></td><td></td></tr><tr><th>11</th><td></td><td></td></tr>
              </tbody>
            </table>
          </div>
          <div class="vscroll">
            <button aria-label="Scroll up"><svg viewBox="0 0 16 16"><path d="M4 10l4-4 4 4" fill="none" stroke="#555" stroke-width="2"/></svg></button>
            <span class="thumb"></span>
            <button aria-label="Scroll down"><svg viewBox="0 0 16 16"><path d="M4 6l4 4 4-4" fill="none" stroke="#555" stroke-width="2"/></svg></button>
            <span class="split-bar"></span>
          </div>
        </div>
        <footer class="sheet-tabs">
          <button aria-label="Previous sheet"><svg viewBox="0 0 16 16"><path d="M10 4v8L6 8z" fill="#444"/></svg></button><button aria-label="Next sheet"><svg viewBox="0 0 16 16"><path d="M6 4v8l4-4z" fill="#444"/></svg></button><button aria-label="Add sheet"><svg viewBox="0 0 16 16"><path d="M4 8.500h8M8.500 4v8" stroke="#000"/></svg></button><button aria-label="List sheets"><svg viewBox="0 0 16 16"><path d="M5 4l3 7 3-7" fill="none" stroke="#333"/></svg></button>
          <button class="tab"><svg viewBox="0 0 76 17"><path d="M1 0h74l-6 16H7z" fill="#fff"/><path d="M1 0l6 16h1M69 16l6-16" fill="none" stroke="#000" stroke-width="1.500"/></svg><span>Sheet1</span></button>
          <span class="tab-rest"></span>
          <div class="hscroll">
            <button aria-label="Scroll left"><svg viewBox="0 0 16 16"><path d="M10 4L6 8l4 4" fill="none" stroke="#555" stroke-width="2"/></svg></button><span></span><button aria-label="Scroll right"><svg viewBox="0 0 16 16"><path d="M6 4l4 4-4 4" fill="none" stroke="#555" stroke-width="2"/></svg></button>
          </div>
          <svg class="sizer" viewBox="0 0 16 16"><path d="M12 5h2v2h-2zM9 8h2v2H9zM12 8h2v2h-2zM6 11h2v2H6zM9 11h2v2H9zM12 11h2v2h-2z" fill="#b5b5b5"/></svg>
        </footer>
      </div>
    </section>
    <p class="credit">CSDN @i_chensihuo_888</p>
  </main>
</div>
<div class="callout"></div>
<svg class="pointer-arrow" viewBox="0 0 160 100"><path d="M1 99L9 83l1 4L157 1l2 1L15 95l3 3z" fill="#ff2012"/></svg>
</body>
</html>
```

FILE: styles.css
```css
* { box-sizing: border-box; }
html, body { height: 100%; }
body {
  margin: 0;
  display: flex;
  flex-direction: column;
  overflow: hidden;
  position: relative;
  background: #ebebfb;
  color: #000;
  font: 11px/16px "Open Sans", "Noto Sans CJK SC", sans-serif;
}
button, select {
  margin: 0;
  padding: 0;
  border: 0;
  background: none;
  color: inherit;
  font: inherit;
}
svg { width: 16px; height: 16px; flex: none; display: block; shape-rendering: crispEdges; }
svg.smooth { shape-rendering: auto; }
.sprite { position: absolute; width: 0; height: 0; }
u { text-underline-offset: 2px; }

.titlebar { flex: none; height: 23px; display: flex; align-items: center; gap: 4px; padding-left: 2px; background: #fff; }
.titlebar h1 { margin: 0; font-family: "Noto Sans", sans-serif; font-size: 12px; font-weight: 400; }
.app-icon { width: 17px; height: 18px; shape-rendering: auto; }

.menubar { flex: none; height: 24px; display: flex; align-items: center; gap: 1px; background: #ecedfb; }
.menubar > button, .open { height: 18px; padding: 0 7px; }
.menu-anchor { position: relative; }
.open { display: block; padding: 0 6px; border: 1px solid #1578d0; background: linear-gradient(#e8eef6, #a2b9cf); }

.grip { flex: none; width: 9px; height: 15px; background: radial-gradient(circle, #9a9aa8 1px, transparent 2px) 1px 0 / 5px 4px repeat-y; }
.toolbar {
  flex: none;
  height: 25px;
  margin-bottom: 1px;
  padding-left: 1px;
  display: flex;
  align-items: center;
  border-radius: 0 0 4px 4px;
  background: linear-gradient(#f9f9ff, #e4e4f0 45%, #b1b2cb);
}
.toolbar > * { flex: none; }
.toolbar button { width: 22px; height: 22px; display: flex; align-items: center; justify-content: center; }
.toolbar .on, .tools .on { border: 1px solid #1883d7; background: #cfe4f7; }
.sep { width: 8px; height: 18px; background: linear-gradient(#b5b5c5, #b5b5c5) center / 1px 100% no-repeat; }
.more-tools {
  width: 14px;
  height: 25px;
  background:
    linear-gradient(#000, #000) center 17px / 6px 1px no-repeat,
    linear-gradient(#b4b5cf, #f2f2fb);
  position: relative;
}
.more-tools::after { content: ""; position: absolute; left: 4px; bottom: 3px; border: 3px solid transparent; border-top-color: #000; border-bottom: 0; }
.drop::after { content: ""; border: 3px solid transparent; border-top-color: #000; border-bottom: 0; }
.toolbar .drop { width: 31px; justify-content: flex-start; gap: 2px; padding-left: 3px; }
.toolbar .split { width: 35px; gap: 6px; padding-left: 4px; }
.toolbar .dim::after { border-top-color: #777; }
.toolbar .home { font: bold 6px/8px "Liberation Mono", monospace; color: #636876; }
.covered { width: 223px; }
.covered.wide { width: 229px; }

.combo { position: relative; width: 58px; height: 20px; display: flex; align-items: center; border: 1px solid #fff; background: #fff; }
.combo select { appearance: none; flex: 1; min-width: 0; height: 18px; padding-left: 2px; opacity: 1; }
.combo::after { content: ""; position: absolute; right: 4px; top: 8px; border: 3px solid transparent; border-top-color: #000; border-bottom: 0; }
.combo.zoom { width: 56px; height: 18px; margin: 0 3px; background: linear-gradient(90deg, #fff 43px, #dfdfec 43px); }
.combo.off { margin: 0 2px; border: 1px solid #a5a5a5; background: #efefef; color: #777; font-size: 12px; }
.combo.off::after { border-top-color: #777; }
.combo.font { width: 126px; padding-left: 4px; background: #f2f4f8; }
.combo.stroke { background: linear-gradient(#000, #000) 4px center / 33px 1px no-repeat, linear-gradient(90deg, #f5f9fe 41px, #efefef 41px); }
.toolbar .letter { font: 16px/20px "Liberation Serif", serif; color: #636876; }
.toolbar .swatch { width: 53px; gap: 5px; }
.toolbar .swatch::before { content: ""; width: 36px; height: 16px; border: 1px solid #a9adbb; border-right-color: #fff; border-bottom-color: #fff; background: #e5e5f0; }

.body { flex: 1; min-height: 0; display: flex; border-top: 1px solid #dcdcea; }
.side-tabs { width: 21px; display: flex; flex-direction: column; align-items: flex-start; gap: 15px; padding-top: 3px; }
.side-tabs button {
  width: 19px;
  padding: 3px 2px 23px 0;
  writing-mode: vertical-rl;
  text-align: left;
  border: solid #d0d0d4;
  border-width: 0 1px 1px 0;
  background: #f0f0f0;
  color: #444;
  font: 10px/14px "Liberation Mono", monospace;
}
.tools { width: 36px; display: flex; flex-direction: column; overflow: hidden; border-left: 1px solid #b8b9ce; background: linear-gradient(90deg, #f8faff, #e3e4ef 50%, #acadc6); }
.tools button { flex: none; width: 22px; height: 22px; margin-left: 1px; display: flex; align-items: center; gap: 2px; padding-left: 3px; }
.tools .on { padding-left: 2px; }
.tools .drop { width: 30px; }
.hgrip { flex: none; height: 9px; margin: 0 6px 0 4px; background: radial-gradient(circle, #9a9aa8 1px, transparent 2px) 0 3px / 4px 4px repeat-x; }
.hmore { flex: none; height: 14px; background: linear-gradient(90deg, #eeeefa, #b0b1ca); position: relative; }
.hmore::after { content: ""; position: absolute; right: 4px; top: 4px; border: 3px solid transparent; border-left-color: #000; border-right: 0; }
.hmore::before { content: ""; position: absolute; right: 9px; top: 4px; width: 1px; height: 6px; background: #000; }

.desktop { flex: 1; position: relative; overflow: hidden; border: solid #6e6e6e; border-width: 1px 0 0 2px; background: #ababab; }
.credit { position: absolute; right: 16px; bottom: 7px; margin: 0; font-size: 19px; line-height: 26px; color: #dedede; text-shadow: 1px 1px 1px #888; }

.book {
  position: absolute;
  left: 20px;
  top: 21px;
  width: 396px;
  height: 321px;
  display: flex;
  flex-direction: column;
  padding: 1px 6px 7px 8px;
  border: 1px solid #111;
  border-radius: 6px 6px 0 0;
  box-shadow: inset 1px 1px #fff, inset -1px -1px #30c5dc;
  background: linear-gradient(#98b2ce, #b9d1ea 32px, #b9d1ea);
}
.book-title { height: 29px; display: flex; align-items: center; gap: 2px; padding: 4px 2px 0 0; }
.book-title h2 { flex: 1; margin: 0 0 0 2px; font-size: 13px; font-weight: 400; }
.book-title button { width: 32px; height: 18px; display: grid; place-items: center; border: 1px solid #62748e; border-radius: 2px; box-shadow: inset 0 0 0 1px #d5e4f4; background: linear-gradient(#c1d4e9 45%, #99b2cd 45%, #b7cee6); }
.book-title .close { border-color: #5a1414; box-shadow: inset 0 0 0 1px #e0a59d; background: linear-gradient(#dfa198 45%, #b53c28 45%, #cc6a54); }
.book-body { flex: 1; min-height: 0; display: flex; flex-direction: column; border: 1px solid #fff; border-top-color: #666; border-left-color: #666; background: #e0dfe4; }
.sheet-row { flex: 1; min-height: 0; display: flex; }
.sheet { flex: 1; overflow: hidden; }
table { border-collapse: separate; border-spacing: 0; table-layout: fixed; width: 220px; font: 10px/14px "Liberation Mono", monospace; }
th { width: 67px; height: 16px; padding: 0 2px; font-weight: 400; text-align: right; vertical-align: top; border: solid #000; border-width: 0 1px 1px 0; background: #e0dfe4; }
tr > th:first-child { width: 86px; }
thead th { height: 24px; text-align: center; vertical-align: middle; }
td { padding: 0; border: solid #c0c0c0; border-width: 0 1px 1px 0; background: #f4f4f4; }
.label td { background: #faf8c8; }
.formula td { background: #f8f5b0; }
.vscroll { width: 19px; display: flex; flex-direction: column; border-left: 1px solid #fff; background: #f0f0f0; }
.vscroll button { height: 17px; padding-right: 2px; display: grid; place-items: center; }
.thumb { flex: none; width: 15px; height: 69px; margin: 0 1px auto 0; background: #cdcdcd; }
.split-bar { flex: none; height: 6px; border: solid #222; border-width: 1px 0 2px; background: #fff; }
.sheet-tabs { flex: none; height: 17px; display: flex; background: #f0f0f0; }
.sheet-tabs > button { flex: none; width: 17px; display: grid; place-items: center; border: 1px solid #fff; border-right-color: #777; border-bottom-color: #777; }
.sheet-tabs > .tab { width: 76px; border: 0; background: #c6c6c6; }
.tab > * { grid-area: 1 / 1; }
.tab svg { width: 76px; height: 17px; shape-rendering: auto; }
.tab span { font: bold 15px/17px "Liberation Mono", monospace; }
.tab-rest { flex: 1; border: solid #000; border-width: 1px 1px 1px 0; background: #c6c6c6; }
.hscroll { width: 86px; margin: 0 4px; display: flex; border: solid #000; border-width: 0 1px; }
.hscroll button { width: 17px; }
.hscroll span { flex: 1; background: #cdcdcd; }
.sizer { width: 20px; height: 17px; border: solid #000; border-width: 1px 0 0 1px; }

.menu {
  position: absolute;
  z-index: 2;
  left: 0;
  top: 18px;
  width: 244px;
  padding: 1px 0;
  border: 1px solid #808080;
  box-shadow: 1px 1px 2px rgba(0, 0, 0, .3);
  background: linear-gradient(90deg, #f1f1f1 24px, #d5d5d5 24px, #d5d5d5 25px, #fdfdfd 25px);
}
.menu button { width: 238px; height: 22px; margin-left: 2px; display: flex; align-items: center; text-align: left; white-space: nowrap; }
.mark { flex: none; width: 28px; height: 20px; padding-left: 2px; display: flex; align-items: center; }
.checked { width: 18px; padding: 0; margin-right: 10px; border: 1px solid #1883d7; background: #cfe4f7; }
.menu kbd { margin-left: auto; padding-right: 10px; font: inherit; }
.menu hr { height: 1px; margin: 4px 0 3px 34px; border: 0; background: #c4c4c4; }
.sub::after { content: ""; margin: 0 2px 0 auto; border: 5px solid transparent; border-left-color: #000; border-right: 0; }
.menu .hot { border: 1px solid #8fb4d4; border-radius: 3px; background: linear-gradient(#f2f8fd, #b9dbf3); }
.hot .mark { width: 27px; }
.tooltip { position: absolute; left: 111px; top: 355px; height: 47px; padding: 2px 6px 1px 5px; display: flex; flex-direction: column; justify-content: space-between; white-space: nowrap; border: 1px solid #767676; box-shadow: 3px 3px 1px rgba(0, 0, 0, .45); background: linear-gradient(#fff, #e9e9ef); }
.more { padding-left: 3px; }

.callout { position: absolute; z-index: 3; left: 715px; top: 340px; width: 405px; height: 84px; border: 3px solid #ff2012; border-radius: 4px; }
.pointer-arrow { position: absolute; z-index: 3; left: 1124px; top: 256px; width: 160px; height: 100px; shape-rendering: auto; }
```
